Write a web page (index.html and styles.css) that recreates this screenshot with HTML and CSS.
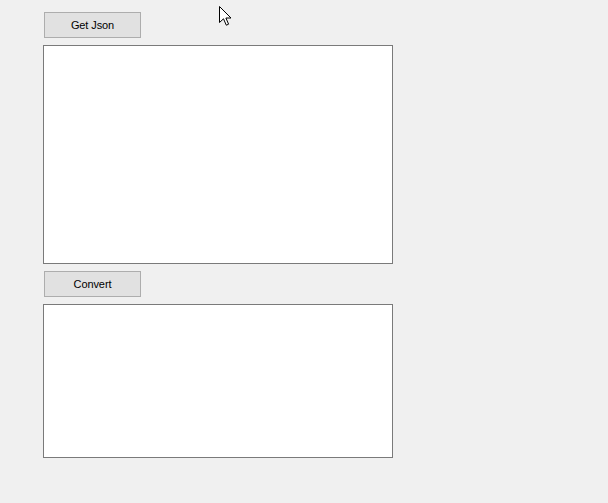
FILE: index.html
```html
<!DOCTYPE html>
<html lang="en">
<head>
    <meta charset="UTF-8">
    <title>Json Convert</title>
    <link rel="stylesheet" href="styles.css">
</head>
<body>
<div class="form">
    <button class="btn" type="button">Get Json</button>
    <textarea class="box box-json"></textarea>
    <button class="btn" type="button">Convert</button>
    <textarea class="box box-result"></textarea>
</div>

<svg class="cursor" width="13" height="20" viewBox="0 0 13 20">
    <path d="M0.5 0.5 L0.5 16.5 L4.5 12.8 L7.3 19.2 L9.6 18.2 L6.9 12 L12 12 Z" fill="#fff" stroke="#000" stroke-width="1" stroke-linejoin="miter"/>
</svg>
</body>
</html>
```

FILE: styles.css
```css
html, body {
    margin: 0;
    width: 100%;
    height: 100%;
    background: #f0f0f0;
    overflow: hidden;
}
.form {
    display: flex;
    flex-direction: column;
    align-items: flex-start;
    gap: 7px;
    padding: 12px 0 0 43px;
}
.btn {
    margin: 0 0 0 1px;
    width: 97px;
    height: 26px;
    padding: 0;
    border: 1px solid #adadad;
    background: #e1e1e1;
    color: #000;
    font-family: "Liberation Sans", Arial, sans-serif;
    font-size: 11px;
    letter-spacing: -0.1px;
    box-sizing: border-box;
}
.box {
    margin: 0;
    width: 350px;
    border: 1px solid #7a7a7a;
    background: #fff;
    box-sizing: border-box;
    resize: none;
    padding: 2px;
    font-family: "Liberation Sans", Arial, sans-serif;
    font-size: 11px;
}
.box-json {
    height: 219px;
}
.box-result {
    height: 154px;
}
.cursor {
    position: absolute;
    left: 219px;
    top: 6px;
}
```
